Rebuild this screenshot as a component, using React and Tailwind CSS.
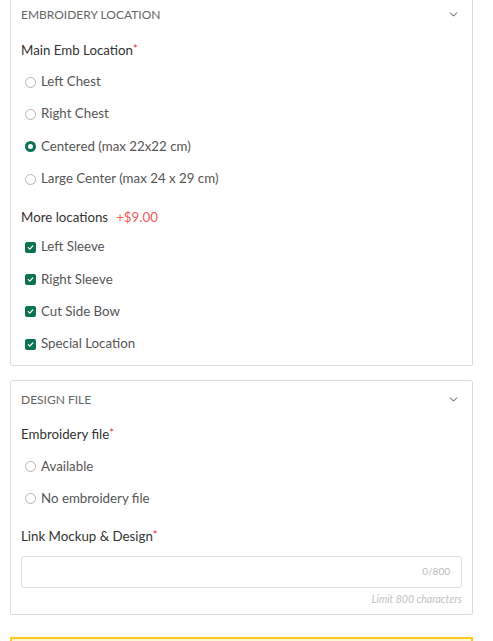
import { ChevronDown } from 'lucide-react';

const mainLocations = [
  { label: 'Left Chest', checked: false },
  { label: 'Right Chest', checked: false },
  { label: 'Centered (max 22x22 cm)', checked: true },
  { label: 'Large Center (max 24 x 29 cm)', checked: false },
];

const moreLocations = ['Left Sleeve', 'Right Sleeve', 'Cut Side Bow', 'Special Location'];

function Radio({ label, checked }) {
  return (
    <label className="flex items-center h-[32.3px] pl-[4px] gap-[5px] text-[13.3px] text-[#555]">
      {checked ? (
        <span className="w-[11px] h-[11px] rounded-full border-[3px] border-[#0b7252] bg-white" />
      ) : (
        <span className="w-[11px] h-[11px] rounded-full border border-[#b5b5b5] bg-white" />
      )}
      <span>{label}</span>
    </label>
  );
}

function Check({ label }) {
  return (
    <label className="flex items-center h-[32.3px] pl-[4px] gap-[5px] text-[13.3px] text-[#555]">
      <span className="w-[11px] h-[11px] rounded-[2px] bg-[#0b7252] flex items-center justify-center">
        <svg width="7" height="7" viewBox="0 0 8 8" fill="none">
          <path d="M1.5 4.2 3.2 5.8 6.5 2.3" stroke="white" strokeWidth="1.4" strokeLinecap="round" strokeLinejoin="round" />
        </svg>
      </span>
      <span>{label}</span>
    </label>
  );
}

function Section({ title, children }) {
  return (
    <div className="border border-[#dcdcdc] rounded-[2px] bg-white px-[10px]">
      <div className="flex items-center justify-between h-[37px]">
        <span className="text-[12px] text-[#666] uppercase">{title}</span>
        <ChevronDown size={13} strokeWidth={1.8} className="text-[#444] mr-[2px]" />
      </div>
      {children}
    </div>
  );
}

function Label({ children, extra }) {
  return (
    <div className="flex items-center h-[26px] text-[13.3px] text-[#333]">
      {children}
      <span className="text-[#e5283a] text-[11px] self-start mt-[3px]">*</span>
      {extra}
    </div>
  );
}

export default function App() {
  return (
    <div className="w-[493px] h-[641px] overflow-hidden bg-white px-[10px] pr-[20px] font-['Lato',sans-serif]">
      <div className="-mt-[5px]">
        <Section title="Embroidery Location">
          <div className="mt-[5px]">
            <Label>Main Emb Location</Label>
          </div>
          <div className="mt-[2px]">
            {mainLocations.map((l) => (
              <Radio key={l.label} {...l} />
            ))}
          </div>
          <div className="flex items-center h-[26px] mt-[10px] text-[13.3px] text-[#333] gap-[8px]">
            <span>More locations</span>
            <span className="text-[#f05a5a]">+$9.00</span>
          </div>
          <div className="pb-[5px]">
            {moreLocations.map((l) => (
              <Check key={l} label={l} />
            ))}
          </div>
        </Section>

        <div className="mt-[14px]">
          <Section title="Design File">
            <div className="mt-[4px]">
              <Label>Embroidery file</Label>
            </div>
            <div className="mt-[2px]">
              <Radio label="Available" checked={false} />
              <Radio label="No embroidery file" checked={false} />
            </div>
            <div className="mt-[9px]">
              <Label>Link Mockup &amp; Design</Label>
            </div>
            <div className="mt-[6px] h-[32px] border border-[#dedede] rounded-[3px] flex items-center justify-end pr-[11px] text-[10px] text-[#bbb]">
              0/800
            </div>
            <div className="text-right text-[10.5px] italic text-[#c2c2c2] h-[22px] leading-[22px] mb-[4px]">
              Limit 800 characters
            </div>
          </Section>
        </div>

        <div className="mt-[22px] h-[20px] border-2 border-[#ffc81e] bg-[#fff8d6]" />
      </div>
    </div>
  );
}
